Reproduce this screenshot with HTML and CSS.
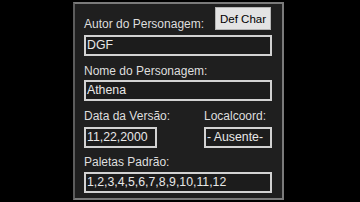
FILE: index.html
```html
<!DOCTYPE html>
<html>
<head>
    <title>Definições do Personagem</title>
    <link rel="stylesheet" href="styles.css">
</head>
<body>
    <div class="panel">
        <div class="head">
            <label class="label">Autor do Personagem:</label>
            <button class="def-btn">Def Char</button>
        </div>
        <div class="field first">DGF</div>

        <label class="label gap">Nome do Personagem:</label>
        <div class="field tight">Athena</div>

        <div class="pair">
            <label class="label">Data da Versão:</label>
            <label class="label">Localcoord:</label>
            <div class="field date">11,22,2000</div>
            <div class="field">- Ausente-</div>
        </div>

        <label class="label gap-sm">Paletas Padrão:</label>
        <div class="field pal">1,2,3,4,5,6,7,8,9,10,11,12</div>
    </div>
</body>
</html>
```

FILE: styles.css
```css
body {
    margin: 0;
    background-color: #000000;
    font-family: "Liberation Sans", Arial, sans-serif;
    font-size: 12px;
}

.panel {
    box-sizing: border-box;
    width: 211px;
    height: 198px;
    margin: 2px 0 0 73px;
    padding: 0 10px 0 9px;
    background-color: #1f1f1f;
    border: 2px solid #7a7a7a;
    border-left-color: #5c5c5c;
    display: flex;
    flex-direction: column;
}

.label {
    display: block;
    color: #dedede;
    line-height: 15px;
    height: 15px;
    white-space: nowrap;
}

.head {
    display: flex;
    justify-content: space-between;
    align-items: flex-end;
    height: 28px;
}

.def-btn {
    box-sizing: border-box;
    width: 56px;
    height: 23px;
    margin: 0 1px 2px 0;
    padding: 0;
    background-color: #e3e3e3;
    border: 1px solid #b4b4b4;
    color: #000000;
    font-family: "Liberation Sans", Arial, sans-serif;
    font-size: 11.5px;
}

.field {
    box-sizing: border-box;
    height: 21px;
    padding-left: 1px;
    border: 2px solid #d2d2d2;
    background-color: #1c1c1c;
    color: #e8e8e8;
    font-size: 12.3px;
    line-height: 17px;
    white-space: nowrap;
    overflow: hidden;
}

.first {
    margin-top: 3px;
}

.gap {
    margin-top: 8px;
}

.tight {
    margin-top: 1px;
}

.pair {
    display: grid;
    grid-template-columns: 120px 68px;
    row-gap: 3px;
    margin-top: 8px;
}

.date {
    width: 73px;
}

.gap-sm {
    margin-top: 7px;
}

.pal {
    margin-top: 2px;
}
```
